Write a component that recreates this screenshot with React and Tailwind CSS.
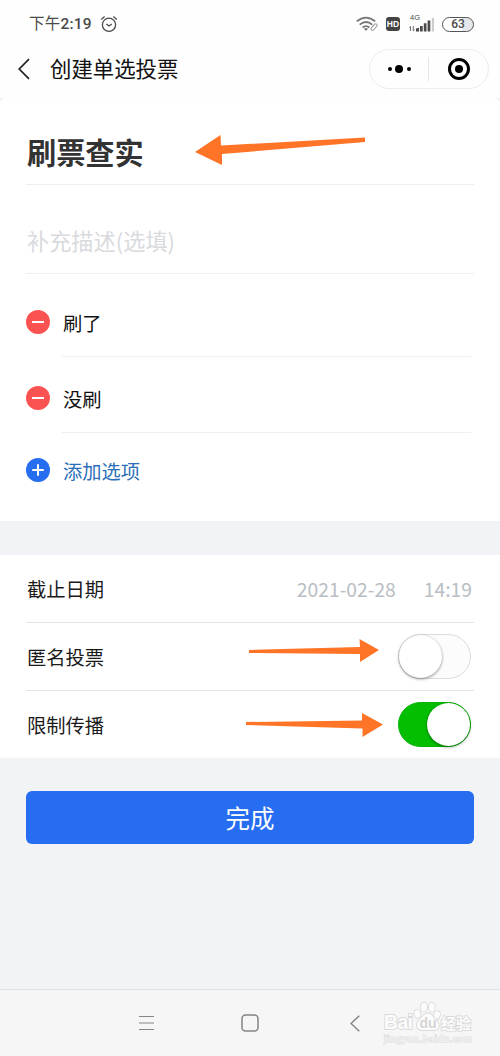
import { useState } from "react";
import clsx from "clsx";

const StatusBar = () => (
  <div className="flex h-11 items-center justify-between pt-1 pl-[29px] pr-[26px] text-[#4a4a4a]">
    <div className="flex items-center gap-2">
      <span className="font-['Roboto','Noto_Sans_CJK_SC',sans-serif] text-[15.5px] leading-5 tracking-[0.2px]">
        下午<span className="font-medium">2:19</span>
      </span>
      <svg width="18" height="18" viewBox="0 0 18 18" fill="none" stroke="currentColor" strokeWidth="1.3">
        <circle cx="9" cy="9.8" r="6.6" />
        <path d="M1.2 4.6 4.6 1.6M16.8 4.6 13.4 1.6M6.4 8.9 9 11l2.8-2.1" />
      </svg>
    </div>
    <div className="flex items-center">
      {/* Wifi with link mark */}
      <svg width="22" height="17" viewBox="0 0 22 17" fill="none" stroke="#777" strokeWidth="1.8">
        <path d="M.8 5.4Q10 -2.1 19.2 5.4M3.7 8.6Q10 3.4 16.3 8.6M6.6 11.5Q10 8.7 13.4 11.5" />
        <path d="m8 12.8 2 2.2 2-2.2Q10 11.4 8 12.8Z" fill="#777" stroke="none" />
        <rect x="16.6" y="7.2" width="3" height="7.6" rx="1.5" transform="rotate(40 18 11)" fill="#fff" stroke="#999" strokeWidth="1" />
      </svg>
      <span className="ml-2 flex h-[14px] w-[14px] items-center justify-center rounded-[3px] bg-[#444] font-['Liberation_Sans'] text-[8.5px] font-bold text-white">
        HD
      </span>
      <div className="relative ml-[9px] h-[17px] w-[26px]">
        <span className="absolute -top-[2px] left-[1px] font-['Liberation_Sans'] text-[7.5px] leading-[8px]">4G</span>
        <svg className="absolute inset-0" width="26" height="17" viewBox="0 0 26 17" fill="#4a4a4a">
          <path d="M1 10.5h1V15H1zM3.8 10h1v4.500h-1zM0 11.800 1.500 9.800V11.800zM3.800 13.500h2.200L4.300 15.500z" opacity=".8" />
          <path d="M7 12.500 10 11.800V15.500H7zM11 10h2.700v5.500H11zM14.800 7.300h2.700v8.200h-2.700zM18.600 4.500h2.700v11h-2.700z" />
          <path d="M22.800 2h2.200v13.500h-2.200z" fill="#ccc" />
        </svg>
      </div>
      <span className="ml-[7px] flex h-[15px] w-8 items-center justify-center rounded-full border-[1.5px] border-[#555] bg-linear-to-r from-white from-65% to-gray-200 to-65% font-['Roboto'] text-[12px] leading-none font-medium">
        63
      </span>
    </div>
  </div>
);

const Header = () => (
  <div className="flex h-[49px] items-center pl-[18px] pr-[11px]">
    <svg width="12" height="22" viewBox="0 0 12 22" fill="none" stroke="#222" strokeWidth="1.7">
      <path d="M11 1.2 1.2 11 11 20.8" />
    </svg>
    <h1 className="relative -top-px ml-5 text-[21.4px] leading-8 text-[#111]">创建单选投票</h1>
    <div className="ml-auto flex h-10 w-[120px] items-center rounded-full border border-[#ededed]">
      <div className="flex h-6 w-[59px] items-center justify-center gap-[3.5px] border-r border-[#e6e6e6]">
        <span className="size-1 rounded-full bg-black" />
        <span className="size-2 rounded-full bg-black" />
        <span className="size-1 rounded-full bg-black" />
      </div>
      <div className="flex flex-1 items-center justify-center pl-px">
        <span className="flex size-[22px] items-center justify-center rounded-full border-[3px] border-black">
          <span className="size-2 rounded-full bg-black" />
        </span>
      </div>
    </div>
  </div>
);

const OptionIcon = ({ plus }) => (
  <svg width="24" height="24" viewBox="0 0 24 24" className={clsx("shrink-0", plus ? "text-[#266df0]" : "text-[#fb5252]")}>
    <circle cx="12" cy="12" r="12" fill="currentColor" />
    <path d={plus ? "M6.2 12h11.6M12 6.2v11.6" : "M6 12h12"} stroke="#fff" strokeWidth="2" />
  </svg>
);

const Option = ({ label, first }) => (
  <div className={clsx("flex gap-3", first ? "h-[83px]" : "h-[76px]")}>
    <div className={clsx("flex items-center", first ? "pt-[13px]" : "pt-[5px]")}>
      <OptionIcon />
    </div>
    <div className={clsx("mr-[3px] flex flex-1 items-center border-b border-[#efefef] pl-px text-[19.3px] text-[#111]", first ? "pt-[17px]" : "pt-[9px]")}>
      {label}
    </div>
  </div>
);

const Switch = ({ checked, onChange }) => (
  <button
    role="switch"
    aria-checked={checked}
    onClick={() => onChange(!checked)}
    className={clsx(
      "flex h-[45px] w-[73px] items-center rounded-full border",
      checked ? "justify-end border-[#04b404] bg-[#04be02]" : "justify-start border-[#dcdcdc] bg-[#fcfcfc]"
    )}
  >
    <span className="size-[43px] rounded-full bg-white shadow-[0_1px_3px_rgba(0,0,0,0.45)]" />
  </button>
);

// Hand-drawn hint arrow laid over the form
const Arrow = ({ points, width, height, className }) => (
  <svg width={width} height={height} viewBox={`0 0 ${width} ${height}`} className={clsx("pointer-events-none absolute", className)}>
    <polygon points={points} fill="#ff7427" />
  </svg>
);

const Watermark = () => (
  <div className="absolute top-[11px] left-[383px] h-[44px] w-[92px]">
    <svg width="92" height="44" viewBox="0 -1 92 44" fill="#fcfcfc" stroke="#d9d9d9" strokeWidth="1.8" paintOrder="stroke" fontFamily="Liberation Sans, sans-serif">
      <ellipse cx="34.3" cy="11.8" rx="2.8" ry="4" transform="rotate(-15 34.3 11.8)" />
      <ellipse cx="41" cy="4.9" rx="3" ry="4.5" />
      <ellipse cx="48.8" cy="5.2" rx="3" ry="4.5" />
      <ellipse cx="54" cy="13" rx="2.8" ry="4" transform="rotate(15 54 13)" />
      <path d="M44.5 11.5c-4 0-5 4-8.5 7-4 3.6-2 9.500 2.500 9.500h13c4.500 0 6-5.900 2-9.500-3.500-3-5-7-9-7Z" />
      <text x="1" y="27" fontSize="19.5" fontWeight="bold" textLength="29">Bai</text>
      <text x="36.5" y="26" fontSize="14" fontWeight="bold" fill="#d4d4d4" stroke="none">du</text>
      <text x="58" y="26.5" fontSize="15" fontWeight="bold" fontFamily="Noto Sans CJK SC" textLength="30">经验</text>
      <text x="1" y="40" fontSize="9" textLength="88" strokeWidth="1.2">jingyan.baidu.com</text>
    </svg>
  </div>
);

const App = () => {
  const [options] = useState(["刷了", "没刷"]);
  const [anonymous, setAnonymous] = useState(false);
  const [restricted, setRestricted] = useState(true);

  return (
    <div className="flex h-[1056px] w-[500px] flex-col overflow-hidden bg-[#f2f3f7] font-['Noto_Sans_CJK_SC',sans-serif] text-[#1a1a1a]">
      <div className="h-[98px] bg-[#fefefe]">
        <StatusBar />
        <Header />
      </div>

      {/* Title, description and options */}
      <div className="h-[423px] rounded-t-md bg-white px-[26px]">
        <div className="relative flex h-[87px] items-center border-b border-[#efefef] pt-[19px] pl-px">
          <span className="text-[29.2px] leading-10 font-bold text-[#333]">刷票查实</span>
          <Arrow points="0,17 25.5,0 26,10.5 170,2.5 170,7 27,19 27,30" width={170} height={30} className="top-[37px] left-[169px]" />
        </div>
        <div className="flex h-[89px] items-center border-b border-[#efefef] pt-[21px] pl-px">
          <span className="text-[22.2px] leading-8 text-[#d8dade]">补充描述(选填)</span>
        </div>
        {options.map((option, index) => (
          <Option key={option} label={option} first={index === 0} />
        ))}
        <div className="mt-[21px] flex h-8 items-center gap-[13px] text-[19.3px] text-[#2c6fb8]">
          <OptionIcon plus />
          <span className="pt-[3px]">添加选项</span>
        </div>
      </div>

      {/* Settings */}
      <div className="mt-[34px] bg-white px-[26px] text-[19.3px]">
        <div className="flex h-[68px] items-center justify-between border-b border-[#e2e2e2] pt-[2px]">
          <span className="pl-px">截止日期</span>
          <div className="flex gap-7 pr-[2px] text-[#b9bec4]">
            <span>2021-02-28</span>
            <span>14:19</span>
          </div>
        </div>
        <div className="relative flex h-[68px] items-center justify-between border-b border-[#e2e2e2] pr-[3px]">
          <span className="pt-[2px] pl-px">匿名投票</span>
          <Arrow points="0,11 111,8 110.5,0 130,11 111,23 111,15 0,14" width={130} height={23} className="top-[16px] left-[223px]" />
          <Switch checked={anonymous} onChange={setAnonymous} />
        </div>
        <div className="relative flex h-[67px] items-center justify-between pr-[3px]">
          <span className="pt-[2px] pl-px">限制传播</span>
          <Arrow points="0,9 116,7.5 116,0 137,11.5 116.5,24 116.5,15.5 0,12" width={137} height={24} className="top-[22px] left-[220px]" />
          <Switch checked={restricted} onChange={setRestricted} />
        </div>
      </div>

      <button className="mx-[26px] mt-[33px] h-[53px] rounded-md bg-[#266df2] pt-px text-[24.5px] leading-none text-white">
        完成
      </button>

      {/* System navigation */}
      <div className="relative mt-auto h-[67px] border-t border-[#e0e1e4] bg-[#f6f6f6]">
        <div className="flex h-full items-center pl-[139px] text-[#858585]">
          <svg width="15" height="16" viewBox="0 0 15 16" fill="none" stroke="currentColor" strokeWidth="1.2">
            <path d="M0 1.5h15M0 8h15M0 14.5h15" />
          </svg>
          <svg className="ml-[87px]" width="18" height="18" viewBox="0 0 18 18" fill="none" stroke="currentColor" strokeWidth="1.5">
            <rect x="1" y="1" width="16" height="16" rx="3.5" />
          </svg>
          <svg className="ml-[91px]" width="10" height="17" viewBox="0 0 10 17" fill="none" stroke="currentColor" strokeWidth="1.5">
            <path d="M9.3.7 1 8.500 9.3 16.3" />
          </svg>
        </div>
        <Watermark />
      </div>
    </div>
  );
};

export default App;
